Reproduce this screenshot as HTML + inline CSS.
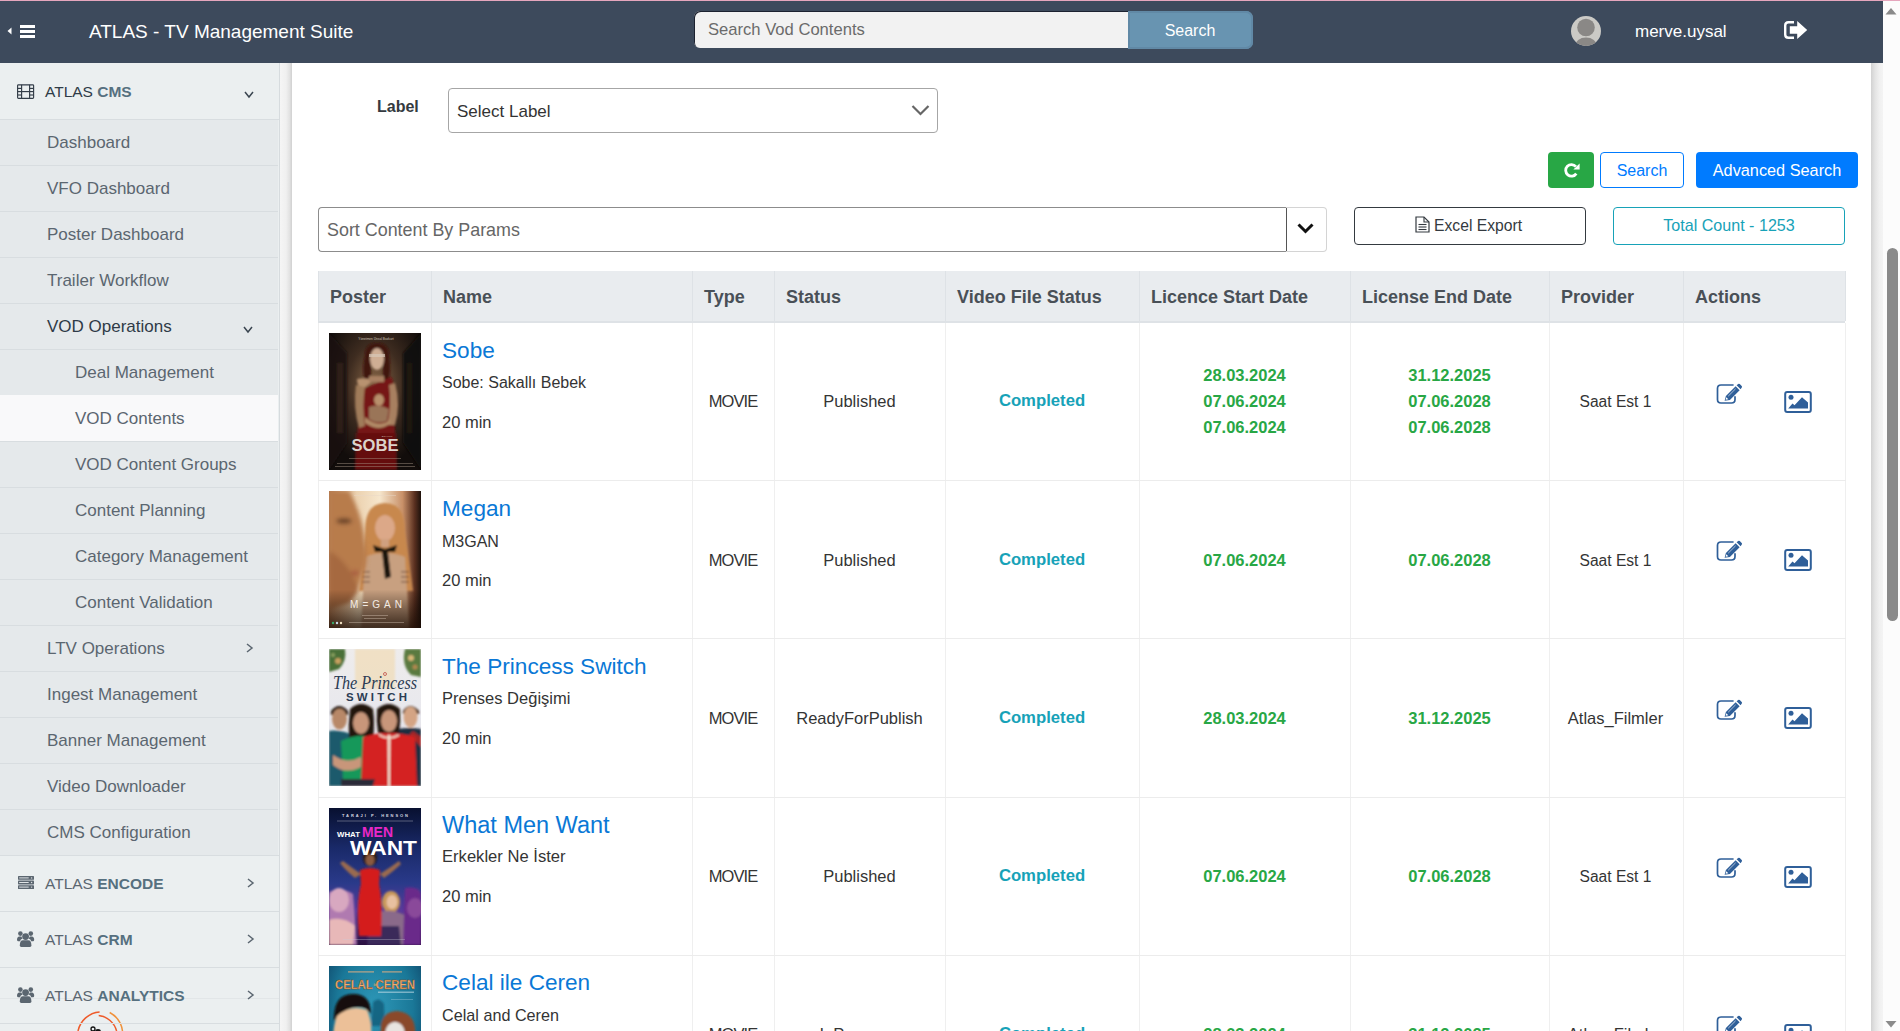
<!DOCTYPE html>
<html><head><meta charset="utf-8"><title>ATLAS - TV Management Suite</title>
<style>
html,body{margin:0;padding:0;width:1900px;height:1031px;overflow:hidden;background:#fff}
body{position:relative;font-family:'Liberation Sans', sans-serif}
.t{position:absolute;white-space:nowrap;font-family:'Liberation Sans', sans-serif}
.r{position:absolute;display:block}
b{font-weight:700}
</style></head><body>
<div class="r" style="left:0px;top:0px;width:1900px;height:1031px;background:#fff"></div>
<div class="r" style="left:0px;top:63px;width:279px;height:968px;background:#ebeff0"></div>
<div class="r" style="left:279px;top:63px;width:1px;height:968px;background:#d6dbde"></div>
<div class="r" style="left:280px;top:63px;width:12px;height:968px;background:linear-gradient(to right,#f5f5f5 0%,#f0f0f0 50%,#e2e2e2 80%,#d0d0d0 100%)"></div>
<div class="r" style="left:0px;top:119px;width:279px;height:1px;background:#d8dde0"></div>
<div class="r" style="left:0px;top:120px;width:278px;height:735px;background:#e5e9eb"></div>
<div class="r" style="left:0px;top:165px;width:278px;height:1px;background:#d8dde0"></div>
<div class="t" style="top:134px;font-size:17px;line-height:17px;color:#5b6670;left:47px;">Dashboard</div>
<div class="r" style="left:0px;top:211px;width:278px;height:1px;background:#d8dde0"></div>
<div class="t" style="top:180px;font-size:17px;line-height:17px;color:#5b6670;left:47px;">VFO Dashboard</div>
<div class="r" style="left:0px;top:257px;width:278px;height:1px;background:#d8dde0"></div>
<div class="t" style="top:226px;font-size:17px;line-height:17px;color:#5b6670;left:47px;">Poster Dashboard</div>
<div class="r" style="left:0px;top:303px;width:278px;height:1px;background:#d8dde0"></div>
<div class="t" style="top:272px;font-size:17px;line-height:17px;color:#5b6670;left:47px;">Trailer Workflow</div>
<div class="r" style="left:0px;top:349px;width:278px;height:1px;background:#d8dde0"></div>
<div class="t" style="top:318px;font-size:17px;line-height:17px;color:#2f3b47;left:47px;">VOD Operations</div>
<div class="r" style="left:0px;top:395px;width:278px;height:1px;background:#d8dde0"></div>
<div class="t" style="top:364px;font-size:17px;line-height:17px;color:#5b6670;left:75px;">Deal Management</div>
<div class="r" style="left:0px;top:395px;width:278px;height:46px;background:#f9f9fa"></div>
<div class="r" style="left:0px;top:441px;width:278px;height:1px;background:#d8dde0"></div>
<div class="t" style="top:410px;font-size:17px;line-height:17px;color:#5b6670;left:75px;">VOD Contents</div>
<div class="r" style="left:0px;top:487px;width:278px;height:1px;background:#d8dde0"></div>
<div class="t" style="top:456px;font-size:17px;line-height:17px;color:#5b6670;left:75px;">VOD Content Groups</div>
<div class="r" style="left:0px;top:533px;width:278px;height:1px;background:#d8dde0"></div>
<div class="t" style="top:502px;font-size:17px;line-height:17px;color:#5b6670;left:75px;">Content Planning</div>
<div class="r" style="left:0px;top:579px;width:278px;height:1px;background:#d8dde0"></div>
<div class="t" style="top:548px;font-size:17px;line-height:17px;color:#5b6670;left:75px;">Category Management</div>
<div class="r" style="left:0px;top:625px;width:278px;height:1px;background:#d8dde0"></div>
<div class="t" style="top:594px;font-size:17px;line-height:17px;color:#5b6670;left:75px;">Content Validation</div>
<div class="r" style="left:0px;top:671px;width:278px;height:1px;background:#d8dde0"></div>
<div class="t" style="top:640px;font-size:17px;line-height:17px;color:#5b6670;left:47px;">LTV Operations</div>
<div class="r" style="left:0px;top:717px;width:278px;height:1px;background:#d8dde0"></div>
<div class="t" style="top:686px;font-size:17px;line-height:17px;color:#5b6670;left:47px;">Ingest Management</div>
<div class="r" style="left:0px;top:763px;width:278px;height:1px;background:#d8dde0"></div>
<div class="t" style="top:732px;font-size:17px;line-height:17px;color:#5b6670;left:47px;">Banner Management</div>
<div class="r" style="left:0px;top:809px;width:278px;height:1px;background:#d8dde0"></div>
<div class="t" style="top:778px;font-size:17px;line-height:17px;color:#5b6670;left:47px;">Video Downloader</div>
<div class="r" style="left:0px;top:855px;width:278px;height:1px;background:#d8dde0"></div>
<div class="t" style="top:824px;font-size:17px;line-height:17px;color:#5b6670;left:47px;">CMS Configuration</div>
<svg class="r" style="left:243px;top:90px" width="12" height="9" viewBox="0 0 12 9"><polyline points="2,2 6.0,7 10,2" fill="none" stroke="#3a4550" stroke-width="1.5"/></svg>
<svg class="r" style="left:242px;top:325px" width="12" height="9" viewBox="0 0 12 9"><polyline points="2,2 6.0,7 10,2" fill="none" stroke="#3a4550" stroke-width="1.5"/></svg>
<svg class="r" style="left:245px;top:642px" width="9" height="12" viewBox="0 0 9 12"><polyline points="2,2 7,6.0 2,10" fill="none" stroke="#5b6670" stroke-width="1.5"/></svg>
<svg class="r" style="left:16px;top:83px" width="19" height="17" viewBox="0 0 19 17"><g fill="none" stroke="#333d48" stroke-width="1.15"><rect x="1.6" y="1.8" width="16" height="13.6" rx="0.8"/><line x1="5.6" y1="1.8" x2="5.6" y2="15.4"/><line x1="13.6" y1="1.8" x2="13.6" y2="15.4"/><line x1="1.6" y1="8.6" x2="17.6" y2="8.6"/><line x1="1.6" y1="5.4" x2="5.6" y2="5.4"/><line x1="1.6" y1="12" x2="5.6" y2="12"/><line x1="13.6" y1="5.4" x2="17.6" y2="5.4"/><line x1="13.6" y1="12" x2="17.6" y2="12"/></g></svg>
<div class="t" style="left:45px;top:84px;font-size:15.5px;line-height:15.5px;color:#2f3b47">ATLAS <b style="color:#56707f">CMS</b></div>
<div class="r" style="left:0px;top:855px;width:279px;height:1px;background:#d8dde0"></div>
<div class="r" style="left:0px;top:998px;width:279px;height:1px;background:#e2e6e8"></div>
<div class="r" style="left:0px;top:911px;width:279px;height:1px;background:#d8dde0"></div>
<div class="t" style="left:45px;top:876px;font-size:15.5px;line-height:15.5px;color:#5b6670">ATLAS <b style="color:#56707f">ENCODE</b></div>
<svg class="r" style="left:246px;top:877px" width="9" height="12" viewBox="0 0 9 12"><polyline points="2,2 7,6.0 2,10" fill="none" stroke="#5b6670" stroke-width="1.5"/></svg>
<div class="r" style="left:0px;top:967px;width:279px;height:1px;background:#d8dde0"></div>
<div class="t" style="left:45px;top:932px;font-size:15.5px;line-height:15.5px;color:#5b6670">ATLAS <b style="color:#56707f">CRM</b></div>
<svg class="r" style="left:246px;top:933px" width="9" height="12" viewBox="0 0 9 12"><polyline points="2,2 7,6.0 2,10" fill="none" stroke="#5b6670" stroke-width="1.5"/></svg>
<div class="r" style="left:0px;top:1023px;width:279px;height:1px;background:#d8dde0"></div>
<div class="t" style="left:45px;top:988px;font-size:15.5px;line-height:15.5px;color:#5b6670">ATLAS <b style="color:#56707f">ANALYTICS</b></div>
<svg class="r" style="left:246px;top:989px" width="9" height="12" viewBox="0 0 9 12"><polyline points="2,2 7,6.0 2,10" fill="none" stroke="#5b6670" stroke-width="1.5"/></svg>
<svg class="r" style="left:18px;top:876px" width="16" height="13" viewBox="0 0 16 13"><g fill="#5b6670"><rect x="0" y="0" width="16" height="3.8" rx="0.6"/><rect x="0" y="4.6" width="16" height="3.8" rx="0.6"/><rect x="0" y="9.2" width="16" height="3.8" rx="0.6"/></g><g fill="#dfe3e6"><rect x="1.2" y="1.4" width="9.5" height="1"/><rect x="1.2" y="6" width="9.5" height="1"/><rect x="1.2" y="10.6" width="9.5" height="1"/><circle cx="13.6" cy="1.9" r="0.7"/><circle cx="13.6" cy="6.5" r="0.7"/><circle cx="13.6" cy="11.1" r="0.7"/></g></svg>
<svg class="r" style="left:17px;top:931px" width="18" height="16" viewBox="0 0 18 16"><g fill="#5b6670"><circle cx="8.6" cy="5.6" r="3.4"/><circle cx="3.4" cy="2.6" r="2.3"/><circle cx="13.8" cy="2.6" r="2.3"/><path d="M2.8,14.6 Q2.8,9.2 6,9.2 H11.2 Q14.4,9.2 14.4,14.6 Q14.4,16 13,16 H4.2 Q2.8,16 2.8,14.6 Z"/><path d="M0,8.8 Q0,5.6 2.4,5.4 H4.4 Q5,6.6 5.6,7.6 Q3.4,8.4 3,10.2 H1 Q0,10.2 0,8.8 Z"/><path d="M17.2,8.8 Q17.2,5.6 14.8,5.4 H12.8 Q12.2,6.6 11.6,7.6 Q13.8,8.4 14.2,10.2 H16.2 Q17.2,10.2 17.2,8.8 Z"/></g></svg>
<svg class="r" style="left:17px;top:987px" width="18" height="16" viewBox="0 0 18 16"><g fill="#5b6670"><circle cx="8.6" cy="5.6" r="3.4"/><circle cx="3.4" cy="2.6" r="2.3"/><circle cx="13.8" cy="2.6" r="2.3"/><path d="M2.8,14.6 Q2.8,9.2 6,9.2 H11.2 Q14.4,9.2 14.4,14.6 Q14.4,16 13,16 H4.2 Q2.8,16 2.8,14.6 Z"/><path d="M0,8.8 Q0,5.6 2.4,5.4 H4.4 Q5,6.6 5.6,7.6 Q3.4,8.4 3,10.2 H1 Q0,10.2 0,8.8 Z"/><path d="M17.2,8.8 Q17.2,5.6 14.8,5.4 H12.8 Q12.2,6.6 11.6,7.6 Q13.8,8.4 14.2,10.2 H16.2 Q17.2,10.2 17.2,8.8 Z"/></g></svg>
<svg class="r" style="left:70px;top:1005px" width="60" height="26" viewBox="0 0 60 26"><g fill="none" stroke-width="1.5"><path d="M 8,26 A 24,24 0 0 1 29.6,7" stroke="#ee5a2a"/><path d="M 28.7,10.5 A 21,21 0 0 1 46.6,26" stroke="#ee5a2a"/><path d="M 39.7,7.5 A 25,25 0 0 1 52.5,26" stroke="#f0913a"/></g><circle cx="23" cy="24" r="2" fill="none" stroke="#111" stroke-width="1.3"/><ellipse cx="28" cy="26.5" rx="3" ry="2.5" fill="#111"/></svg>
<div class="r" style="left:0px;top:1023px;width:279px;height:1px;background:#d8dde0"></div>
<div class="r" style="left:0px;top:0px;width:1900px;height:1px;background:#e6a6bd"></div>
<div class="r" style="left:0px;top:1px;width:1883px;height:62px;background:#3d4a5c"></div>
<div class="r" style="left:20px;top:25px;width:15px;height:3px;background:#fff"></div>
<div class="r" style="left:20px;top:30px;width:15px;height:3px;background:#fff"></div>
<div class="r" style="left:20px;top:35px;width:15px;height:3px;background:#fff"></div>
<svg class="r" style="left:7px;top:27px" width="5" height="8" viewBox="0 0 5 8"><polygon points="4.5,0.5 4.5,7.5 0.5,4" fill="#fff"/></svg>
<div class="t" style="top:22px;font-size:19px;line-height:19px;color:#fff;left:89px;">ATLAS - TV Management Suite</div>
<div class="r" style="left:694px;top:11px;width:434px;height:37px;background:#f2f2f2;border-radius:6px 0 0 6px;box-shadow:inset 1px 1px 0 #1c2230"></div>
<div class="t" style="top:22px;font-size:16.6px;line-height:16.6px;color:#6b6b6b;left:708px;">Search Vod Contents</div>
<div class="r" style="left:1128px;top:11px;width:125px;height:38px;background:#6894b1;border-radius:0 7px 7px 0;box-shadow:inset 0 0 0 2px #6189a6"></div>
<div class="t" style="top:23px;font-size:16px;line-height:16px;color:#fff;left:890px;width:600px;text-align:center;">Search</div>
<svg class="r" style="left:1571px;top:16px" width="30" height="30" viewBox="0 0 30 30"><defs><clipPath id="av"><circle cx="15" cy="15" r="15"/></clipPath></defs><circle cx="15" cy="15" r="15" fill="#cbcac6"/><g clip-path="url(#av)" fill="#8a8886"><circle cx="15" cy="11.5" r="8.8"/><ellipse cx="15" cy="30" rx="11" ry="8.5"/></g></svg>
<div class="t" style="top:23px;font-size:17px;line-height:17px;color:#fff;left:1635px;">merve.uysal</div>
<svg class="r" style="left:1784px;top:21px" width="24" height="18" viewBox="0 0 24 18"><path d="M10,1.2 H4.5 Q1.2,1.2 1.2,4.5 V13.5 Q1.2,16.8 4.5,16.8 H10" fill="none" stroke="#fff" stroke-width="2.4"/><path d="M5.8,5.2 H13.2 V0 L23.2,9 L13.2,18 V12.8 H5.8 Z" fill="#fff"/></svg>
<div class="r" style="left:1871px;top:63px;width:12px;height:968px;background:linear-gradient(to right,#d2d2d2 0%,#e4e4e4 35%,#f0f0f0 70%,#f4f4f4 100%)"></div>
<div class="r" style="left:1883px;top:1px;width:17px;height:1030px;background:#fcfcfc"></div>
<svg class="r" style="left:1884px;top:7px" width="14" height="9" viewBox="0 0 14 9"><polygon points="7,1 12.5,7.5 1.5,7.5" fill="#8a8a8a"/></svg>
<svg class="r" style="left:1884px;top:1020px" width="14" height="9" viewBox="0 0 14 9"><polygon points="1.5,1 12.5,1 7,7.5" fill="#8a8a8a"/></svg>
<div class="r" style="left:1887px;top:248px;width:11px;height:373px;background:#8a8a8a;border-radius:6px"></div>
<div class="t" style="top:99px;font-size:16px;line-height:16px;color:#343a40;font-weight:700;left:377px;">Label</div>
<div class="r" style="left:448px;top:88px;width:490px;height:45px;border:1px solid #a6a6a6;border-radius:4px;box-sizing:border-box;background:#fff"></div>
<div class="t" style="top:103px;font-size:17px;line-height:17px;color:#333;left:457px;">Select Label</div>
<svg class="r" style="left:910px;top:104px" width="21" height="13" viewBox="0 0 21 13"><polyline points="2.5,2 10.5,10 18.5,2" fill="none" stroke="#666" stroke-width="2.2"/></svg>
<div class="r" style="left:1548px;top:152px;width:46px;height:36px;background:#28a745;border-radius:4px"></div>
<svg class="r" style="left:1564px;top:162px" width="17" height="17" viewBox="0 0 17 17"><path d="M11.9,4.6 A5.8,5.8 0 1 0 12.3,11.6" fill="none" stroke="#fff" stroke-width="2.8"/><polygon points="15.6,1.4 15.6,7.6 9.4,7.6" fill="#fff"/></svg>
<div class="r" style="left:1600px;top:152px;width:84px;height:36px;border:1px solid #007bff;border-radius:4px;box-sizing:border-box"></div>
<div class="t" style="top:163px;font-size:16px;line-height:16px;color:#007bff;left:1342px;width:600px;text-align:center;">Search</div>
<div class="r" style="left:1696px;top:152px;width:162px;height:36px;background:#007bff;border-radius:4px"></div>
<div class="t" style="top:162px;font-size:16.3px;line-height:16.3px;color:#fff;left:1477px;width:600px;text-align:center;">Advanced Search</div>
<div class="r" style="left:318px;top:207px;width:969px;height:45px;border:1px solid #8c8c8c;border-right:1px solid #555;border-radius:4px 0 0 4px;box-sizing:border-box"></div>
<div class="t" style="top:222px;font-size:17.9px;line-height:17.9px;color:#666;left:327px;">Sort Content By Params</div>
<div class="r" style="left:1286px;top:207px;width:41px;height:45px;border:1px solid #d4d4d4;border-left:none;border-radius:0 4px 4px 0;box-sizing:border-box"></div>
<svg class="r" style="left:1296px;top:222px" width="21" height="14" viewBox="0 0 21 14"><polyline points="2.5,2.5 9.5,9.5 16.5,2.5" fill="none" stroke="#111" stroke-width="3"/></svg>
<div class="r" style="left:1354px;top:207px;width:232px;height:38px;border:1px solid #343a40;border-radius:4px;box-sizing:border-box"></div>
<svg class="r" style="left:1415px;top:216px" width="15" height="17" viewBox="0 0 15 17"><path d="M1,1 H9 L14,6 V16 H1 Z" fill="none" stroke="#343a40" stroke-width="1.2"/><path d="M9,1 V6 H14" fill="none" stroke="#343a40" stroke-width="1.1"/><g stroke="#343a40" stroke-width="1.1"><line x1="3.5" y1="8.5" x2="11.5" y2="8.5"/><line x1="3.5" y1="11" x2="11.5" y2="11"/><line x1="3.5" y1="13.5" x2="11.5" y2="13.5"/></g></svg>
<div class="t" style="top:218px;font-size:15.7px;line-height:15.7px;color:#343a40;left:1434px;">Excel Export</div>
<div class="r" style="left:1613px;top:207px;width:232px;height:38px;border:1px solid #17a2b8;border-radius:4px;box-sizing:border-box"></div>
<div class="t" style="top:217px;font-size:16.1px;line-height:16.1px;color:#17a2b8;left:1429px;width:600px;text-align:center;">Total Count - 1253</div>
<div class="r" style="left:318px;top:271px;width:1527px;height:50px;background:#e9ecef"></div>
<div class="r" style="left:318px;top:321px;width:1527px;height:2px;background:#dee2e6"></div>
<div class="t" style="top:288px;font-size:18px;line-height:18px;color:#495057;font-weight:700;left:330px;">Poster</div>
<div class="t" style="top:288px;font-size:18px;line-height:18px;color:#495057;font-weight:700;left:443px;">Name</div>
<div class="t" style="top:288px;font-size:18px;line-height:18px;color:#495057;font-weight:700;left:704px;">Type</div>
<div class="t" style="top:288px;font-size:18px;line-height:18px;color:#495057;font-weight:700;left:786px;">Status</div>
<div class="t" style="top:288px;font-size:18px;line-height:18px;color:#495057;font-weight:700;left:957px;">Video File Status</div>
<div class="t" style="top:288px;font-size:18px;line-height:18px;color:#495057;font-weight:700;left:1151px;">Licence Start Date</div>
<div class="t" style="top:288px;font-size:18px;line-height:18px;color:#495057;font-weight:700;left:1362px;">License End Date</div>
<div class="t" style="top:288px;font-size:18px;line-height:18px;color:#495057;font-weight:700;left:1561px;">Provider</div>
<div class="t" style="top:288px;font-size:18px;line-height:18px;color:#495057;font-weight:700;left:1695px;">Actions</div>
<div class="r" style="left:318px;top:271px;width:1px;height:50px;background:#dee2e6"></div>
<div class="r" style="left:318px;top:323px;width:1px;height:708px;background:#efefef"></div>
<div class="r" style="left:431px;top:271px;width:1px;height:50px;background:#dee2e6"></div>
<div class="r" style="left:431px;top:323px;width:1px;height:708px;background:#efefef"></div>
<div class="r" style="left:692px;top:271px;width:1px;height:50px;background:#dee2e6"></div>
<div class="r" style="left:692px;top:323px;width:1px;height:708px;background:#efefef"></div>
<div class="r" style="left:774px;top:271px;width:1px;height:50px;background:#dee2e6"></div>
<div class="r" style="left:774px;top:323px;width:1px;height:708px;background:#efefef"></div>
<div class="r" style="left:945px;top:271px;width:1px;height:50px;background:#dee2e6"></div>
<div class="r" style="left:945px;top:323px;width:1px;height:708px;background:#efefef"></div>
<div class="r" style="left:1139px;top:271px;width:1px;height:50px;background:#dee2e6"></div>
<div class="r" style="left:1139px;top:323px;width:1px;height:708px;background:#efefef"></div>
<div class="r" style="left:1350px;top:271px;width:1px;height:50px;background:#dee2e6"></div>
<div class="r" style="left:1350px;top:323px;width:1px;height:708px;background:#efefef"></div>
<div class="r" style="left:1549px;top:271px;width:1px;height:50px;background:#dee2e6"></div>
<div class="r" style="left:1549px;top:323px;width:1px;height:708px;background:#efefef"></div>
<div class="r" style="left:1683px;top:271px;width:1px;height:50px;background:#dee2e6"></div>
<div class="r" style="left:1683px;top:323px;width:1px;height:708px;background:#efefef"></div>
<div class="r" style="left:1845px;top:271px;width:1px;height:50px;background:#dee2e6"></div>
<div class="r" style="left:1845px;top:323px;width:1px;height:708px;background:#efefef"></div>
<div class="r" style="left:318px;top:480px;width:1528px;height:1px;background:#ececec"></div>
<div class="r" style="left:318px;top:638px;width:1528px;height:1px;background:#ececec"></div>
<div class="r" style="left:318px;top:797px;width:1528px;height:1px;background:#ececec"></div>
<div class="r" style="left:318px;top:955px;width:1528px;height:1px;background:#ececec"></div>
<div class="t" style="top:340px;font-size:22.6px;line-height:22.6px;color:#0a78d6;left:442px;">Sobe</div>
<div class="t" style="top:375px;font-size:16px;line-height:16px;color:#343434;left:442px;">Sobe: Sakallı Bebek</div>
<div class="t" style="top:414px;font-size:16.5px;line-height:16.5px;color:#343434;left:442px;">20 min</div>
<div class="t" style="top:393px;font-size:16.5px;line-height:16.5px;color:#343434;letter-spacing:-0.9px;left:433px;width:600px;text-align:center;">MOVIE</div>
<div class="t" style="top:393px;font-size:16.5px;line-height:16.5px;color:#343434;left:559.5px;width:600px;text-align:center;">Published</div>
<div class="t" style="top:393px;font-size:16.7px;line-height:16.7px;color:#17a2b8;font-weight:700;left:742px;width:600px;text-align:center;">Completed</div>
<div class="t" style="top:367px;font-size:16.5px;line-height:16.5px;color:#28a745;font-weight:700;left:944.5px;width:600px;text-align:center;">28.03.2024</div>
<div class="t" style="top:367px;font-size:16.5px;line-height:16.5px;color:#28a745;font-weight:700;left:1149.5px;width:600px;text-align:center;">31.12.2025</div>
<div class="t" style="top:393px;font-size:16.5px;line-height:16.5px;color:#28a745;font-weight:700;left:944.5px;width:600px;text-align:center;">07.06.2024</div>
<div class="t" style="top:393px;font-size:16.5px;line-height:16.5px;color:#28a745;font-weight:700;left:1149.5px;width:600px;text-align:center;">07.06.2028</div>
<div class="t" style="top:419px;font-size:16.5px;line-height:16.5px;color:#28a745;font-weight:700;left:944.5px;width:600px;text-align:center;">07.06.2024</div>
<div class="t" style="top:419px;font-size:16.5px;line-height:16.5px;color:#28a745;font-weight:700;left:1149.5px;width:600px;text-align:center;">07.06.2028</div>
<div class="t" style="top:394px;font-size:15.6px;line-height:15.6px;color:#343434;left:1315.5px;width:600px;text-align:center;">Saat Est 1</div>
<svg class="r" style="left:1716px;top:383px" width="27" height="22" viewBox="0 0 27 22"><path d="M17.6,2 H5 Q1.5,2 1.5,5.5 V16.5 Q1.5,20 5,20 H15.5 Q19,20 19,16.5 V13.2" fill="none" stroke="#2f5f99" stroke-width="1.7"/><path d="M8.6,17.8 L9.9,12.9 L19.6,3.2 L23.6,7.2 L13.9,16.9 Z" fill="#2f5f99"/><path d="M9.6,16.8 L10.3,14.2 L12.3,16.2 Z" fill="#fff"/><line x1="12.2" y1="13.2" x2="19.6" y2="5.8" stroke="#fff" stroke-width="0.6"/><path d="M20.6,2.2 L22.2,0.9 Q23,0.3 23.8,1.1 L25.7,3 Q26.4,3.8 25.8,4.6 L24.6,6.2 Z" fill="#2f5f99"/></svg>
<svg class="r" style="left:1784px;top:391px" width="28" height="22" viewBox="0 0 28 22"><rect x="1.2" y="1" width="25.6" height="20" rx="2" fill="none" stroke="#2f5f99" stroke-width="2"/><circle cx="7" cy="6.3" r="2.5" fill="#2f5f99"/><path d="M4.2,17.6 L8.5,12.6 L10.5,14.3 L18,6.2 L24,11.6 V17.6 Z" fill="#2f5f99"/></svg>
<div class="t" style="top:498px;font-size:22.6px;line-height:22.6px;color:#0a78d6;left:442px;">Megan</div>
<div class="t" style="top:534px;font-size:16px;line-height:16px;color:#343434;left:442px;">M3GAN</div>
<div class="t" style="top:572px;font-size:16.5px;line-height:16.5px;color:#343434;left:442px;">20 min</div>
<div class="t" style="top:552px;font-size:16.5px;line-height:16.5px;color:#343434;letter-spacing:-0.9px;left:433px;width:600px;text-align:center;">MOVIE</div>
<div class="t" style="top:552px;font-size:16.5px;line-height:16.5px;color:#343434;left:559.5px;width:600px;text-align:center;">Published</div>
<div class="t" style="top:552px;font-size:16.7px;line-height:16.7px;color:#17a2b8;font-weight:700;left:742px;width:600px;text-align:center;">Completed</div>
<div class="t" style="top:552px;font-size:16.5px;line-height:16.5px;color:#28a745;font-weight:700;left:944.5px;width:600px;text-align:center;">07.06.2024</div>
<div class="t" style="top:552px;font-size:16.5px;line-height:16.5px;color:#28a745;font-weight:700;left:1149.5px;width:600px;text-align:center;">07.06.2028</div>
<div class="t" style="top:553px;font-size:15.6px;line-height:15.6px;color:#343434;left:1315.5px;width:600px;text-align:center;">Saat Est 1</div>
<svg class="r" style="left:1716px;top:540px" width="27" height="22" viewBox="0 0 27 22"><path d="M17.6,2 H5 Q1.5,2 1.5,5.5 V16.5 Q1.5,20 5,20 H15.5 Q19,20 19,16.5 V13.2" fill="none" stroke="#2f5f99" stroke-width="1.7"/><path d="M8.6,17.8 L9.9,12.9 L19.6,3.2 L23.6,7.2 L13.9,16.9 Z" fill="#2f5f99"/><path d="M9.6,16.8 L10.3,14.2 L12.3,16.2 Z" fill="#fff"/><line x1="12.2" y1="13.2" x2="19.6" y2="5.8" stroke="#fff" stroke-width="0.6"/><path d="M20.6,2.2 L22.2,0.9 Q23,0.3 23.8,1.1 L25.7,3 Q26.4,3.8 25.8,4.6 L24.6,6.2 Z" fill="#2f5f99"/></svg>
<svg class="r" style="left:1784px;top:549px" width="28" height="22" viewBox="0 0 28 22"><rect x="1.2" y="1" width="25.6" height="20" rx="2" fill="none" stroke="#2f5f99" stroke-width="2"/><circle cx="7" cy="6.3" r="2.5" fill="#2f5f99"/><path d="M4.2,17.6 L8.5,12.6 L10.5,14.3 L18,6.2 L24,11.6 V17.6 Z" fill="#2f5f99"/></svg>
<div class="t" style="top:656px;font-size:22.6px;line-height:22.6px;color:#0a78d6;left:442px;">The Princess Switch</div>
<div class="t" style="top:690px;font-size:16.5px;line-height:16.5px;color:#343434;left:442px;">Prenses Değişimi</div>
<div class="t" style="top:730px;font-size:16.5px;line-height:16.5px;color:#343434;left:442px;">20 min</div>
<div class="t" style="top:710px;font-size:16.5px;line-height:16.5px;color:#343434;letter-spacing:-0.9px;left:433px;width:600px;text-align:center;">MOVIE</div>
<div class="t" style="top:710px;font-size:16.5px;line-height:16.5px;color:#343434;left:559.5px;width:600px;text-align:center;">ReadyForPublish</div>
<div class="t" style="top:710px;font-size:16.7px;line-height:16.7px;color:#17a2b8;font-weight:700;left:742px;width:600px;text-align:center;">Completed</div>
<div class="t" style="top:710px;font-size:16.5px;line-height:16.5px;color:#28a745;font-weight:700;left:944.5px;width:600px;text-align:center;">28.03.2024</div>
<div class="t" style="top:710px;font-size:16.5px;line-height:16.5px;color:#28a745;font-weight:700;left:1149.5px;width:600px;text-align:center;">31.12.2025</div>
<div class="t" style="top:710px;font-size:16.5px;line-height:16.5px;color:#343434;left:1315.5px;width:600px;text-align:center;">Atlas_Filmler</div>
<svg class="r" style="left:1716px;top:699px" width="27" height="22" viewBox="0 0 27 22"><path d="M17.6,2 H5 Q1.5,2 1.5,5.5 V16.5 Q1.5,20 5,20 H15.5 Q19,20 19,16.5 V13.2" fill="none" stroke="#2f5f99" stroke-width="1.7"/><path d="M8.6,17.8 L9.9,12.9 L19.6,3.2 L23.6,7.2 L13.9,16.9 Z" fill="#2f5f99"/><path d="M9.6,16.8 L10.3,14.2 L12.3,16.2 Z" fill="#fff"/><line x1="12.2" y1="13.2" x2="19.6" y2="5.8" stroke="#fff" stroke-width="0.6"/><path d="M20.6,2.2 L22.2,0.9 Q23,0.3 23.8,1.1 L25.7,3 Q26.4,3.8 25.8,4.6 L24.6,6.2 Z" fill="#2f5f99"/></svg>
<svg class="r" style="left:1784px;top:707px" width="28" height="22" viewBox="0 0 28 22"><rect x="1.2" y="1" width="25.6" height="20" rx="2" fill="none" stroke="#2f5f99" stroke-width="2"/><circle cx="7" cy="6.3" r="2.5" fill="#2f5f99"/><path d="M4.2,17.6 L8.5,12.6 L10.5,14.3 L18,6.2 L24,11.6 V17.6 Z" fill="#2f5f99"/></svg>
<div class="t" style="top:814px;font-size:23.5px;line-height:23.5px;color:#0a78d6;left:442px;">What Men Want</div>
<div class="t" style="top:849px;font-size:16.6px;line-height:16.6px;color:#343434;left:442px;">Erkekler Ne İster</div>
<div class="t" style="top:888px;font-size:16.5px;line-height:16.5px;color:#343434;left:442px;">20 min</div>
<div class="t" style="top:868px;font-size:16.5px;line-height:16.5px;color:#343434;letter-spacing:-0.9px;left:433px;width:600px;text-align:center;">MOVIE</div>
<div class="t" style="top:868px;font-size:16.5px;line-height:16.5px;color:#343434;left:559.5px;width:600px;text-align:center;">Published</div>
<div class="t" style="top:868px;font-size:16.7px;line-height:16.7px;color:#17a2b8;font-weight:700;left:742px;width:600px;text-align:center;">Completed</div>
<div class="t" style="top:868px;font-size:16.5px;line-height:16.5px;color:#28a745;font-weight:700;left:944.5px;width:600px;text-align:center;">07.06.2024</div>
<div class="t" style="top:868px;font-size:16.5px;line-height:16.5px;color:#28a745;font-weight:700;left:1149.5px;width:600px;text-align:center;">07.06.2028</div>
<div class="t" style="top:869px;font-size:15.6px;line-height:15.6px;color:#343434;left:1315.5px;width:600px;text-align:center;">Saat Est 1</div>
<svg class="r" style="left:1716px;top:857px" width="27" height="22" viewBox="0 0 27 22"><path d="M17.6,2 H5 Q1.5,2 1.5,5.5 V16.5 Q1.5,20 5,20 H15.5 Q19,20 19,16.5 V13.2" fill="none" stroke="#2f5f99" stroke-width="1.7"/><path d="M8.6,17.8 L9.9,12.9 L19.6,3.2 L23.6,7.2 L13.9,16.9 Z" fill="#2f5f99"/><path d="M9.6,16.8 L10.3,14.2 L12.3,16.2 Z" fill="#fff"/><line x1="12.2" y1="13.2" x2="19.6" y2="5.8" stroke="#fff" stroke-width="0.6"/><path d="M20.6,2.2 L22.2,0.9 Q23,0.3 23.8,1.1 L25.7,3 Q26.4,3.8 25.8,4.6 L24.6,6.2 Z" fill="#2f5f99"/></svg>
<svg class="r" style="left:1784px;top:866px" width="28" height="22" viewBox="0 0 28 22"><rect x="1.2" y="1" width="25.6" height="20" rx="2" fill="none" stroke="#2f5f99" stroke-width="2"/><circle cx="7" cy="6.3" r="2.5" fill="#2f5f99"/><path d="M4.2,17.6 L8.5,12.6 L10.5,14.3 L18,6.2 L24,11.6 V17.6 Z" fill="#2f5f99"/></svg>
<div class="t" style="top:972px;font-size:22.6px;line-height:22.6px;color:#0a78d6;left:442px;">Celal ile Ceren</div>
<div class="t" style="top:1007px;font-size:16.2px;line-height:16.2px;color:#343434;left:442px;">Celal and Ceren</div>
<div class="t" style="top:1046px;font-size:16.5px;line-height:16.5px;color:#343434;left:442px;">20 min</div>
<div class="t" style="top:1026px;font-size:16.5px;line-height:16.5px;color:#343434;letter-spacing:-0.9px;left:433px;width:600px;text-align:center;">MOVIE</div>
<div class="t" style="top:1026px;font-size:16.5px;line-height:16.5px;color:#343434;left:559.5px;width:600px;text-align:center;">InProgress</div>
<div class="t" style="top:1026px;font-size:16.7px;line-height:16.7px;color:#17a2b8;font-weight:700;left:742px;width:600px;text-align:center;">Completed</div>
<div class="t" style="top:1026px;font-size:16.5px;line-height:16.5px;color:#28a745;font-weight:700;left:944.5px;width:600px;text-align:center;">28.03.2024</div>
<div class="t" style="top:1026px;font-size:16.5px;line-height:16.5px;color:#28a745;font-weight:700;left:1149.5px;width:600px;text-align:center;">31.12.2025</div>
<div class="t" style="top:1026px;font-size:16.5px;line-height:16.5px;color:#343434;left:1315.5px;width:600px;text-align:center;">Atlas_Filmler</div>
<svg class="r" style="left:1716px;top:1015px" width="27" height="22" viewBox="0 0 27 22"><path d="M17.6,2 H5 Q1.5,2 1.5,5.5 V16.5 Q1.5,20 5,20 H15.5 Q19,20 19,16.5 V13.2" fill="none" stroke="#2f5f99" stroke-width="1.7"/><path d="M8.6,17.8 L9.9,12.9 L19.6,3.2 L23.6,7.2 L13.9,16.9 Z" fill="#2f5f99"/><path d="M9.6,16.8 L10.3,14.2 L12.3,16.2 Z" fill="#fff"/><line x1="12.2" y1="13.2" x2="19.6" y2="5.8" stroke="#fff" stroke-width="0.6"/><path d="M20.6,2.2 L22.2,0.9 Q23,0.3 23.8,1.1 L25.7,3 Q26.4,3.8 25.8,4.6 L24.6,6.2 Z" fill="#2f5f99"/></svg>
<svg class="r" style="left:1784px;top:1024px" width="28" height="22" viewBox="0 0 28 22"><rect x="1.2" y="1" width="25.6" height="20" rx="2" fill="none" stroke="#2f5f99" stroke-width="2"/><circle cx="7" cy="6.3" r="2.5" fill="#2f5f99"/><path d="M4.2,17.6 L8.5,12.6 L10.5,14.3 L18,6.2 L24,11.6 V17.6 Z" fill="#2f5f99"/></svg>
<svg class="r" style="left:329px;top:333px" width="92" height="137" viewBox="0 0 92 137"><defs><radialGradient id="p1g" cx="0.5" cy="0.38" r="0.6"><stop offset="0" stop-color="#8a6848"/><stop offset="0.5" stop-color="#3e2c20"/><stop offset="1" stop-color="#120d0b"/></radialGradient>
<filter id="b1" x="-20%" y="-20%" width="140%" height="140%"><feGaussianBlur stdDeviation="1.2"/></filter><filter id="b1s"><feGaussianBlur stdDeviation="0.5"/></filter></defs>
<rect width="92" height="137" fill="url(#p1g)"/>
<g filter="url(#b1)">
<path d="M0,0 L18,20 L18,110 L0,137 Z" fill="#1a1310" opacity="0.8"/><path d="M92,0 L74,20 L74,110 L92,137 Z" fill="#0e0a08" opacity="0.9"/>
<rect x="8" y="30" width="6" height="70" fill="#4a3626" opacity="0.35"/><rect x="78" y="30" width="5" height="70" fill="#3a2a20" opacity="0.3"/>
<path d="M36,22 Q36,10 48,10 Q60,10 60,22 Q62,36 60,46 L54,46 L54,30 L42,30 L42,46 L35,46 Q33,34 36,22 Z" fill="#40140e"/>
<path d="M34,56 L62,44 Q66,50 64,60 L68,137 L26,137 Q28,90 34,56 Z" fill="#761414"/><path d="M28,46 Q38,44 44,48 L34,56 Q28,54 28,46 Z" fill="#b89270"/><path d="M26,100 L68,100 L68,137 L26,137 Z" fill="#5a0e0e" opacity="0.6"/>
<path d="M27,52 Q24,75 30,95 L36,93 Q33,72 36,54 Z" fill="#a07c5a"/>
<path d="M66,50 Q72,72 66,92 L58,92 Q63,72 60,52 Z" fill="#a88060"/>
<ellipse cx="48" cy="26" rx="7" ry="11" fill="#cfae94"/>
<rect x="40" y="43" width="15" height="6" fill="#a88062"/>
<ellipse cx="50" cy="67" rx="5" ry="6" fill="#b8906c"/>
<path d="M40,74 Q50,70 60,76 L58,88 Q48,92 40,86 Z" fill="#9a7458"/>
<path d="M36,84 Q50,96 62,86 L62,90 Q50,100 36,90 Z" fill="#b08a66"/>
</g>
<rect x="40" y="21" width="16" height="3" fill="#d8c8b8" opacity="0.7" filter="url(#b1s)"/>
<text x="47" y="7" font-family="Liberation Sans" font-size="3.2" fill="#cfc6bc" text-anchor="middle">Yönetmen Ünsal Bozkurt</text>
<text x="46" y="104" font-family="Liberation Sans" font-size="2.5" fill="#c8b8a8" text-anchor="middle" dx="12">BİR FİLM</text>
<text x="46" y="118" font-family="Liberation Sans" font-weight="700" font-size="16.5" fill="#dcd4cc" text-anchor="middle" textLength="47" lengthAdjust="spacingAndGlyphs">SOBE</text>
<g fill="#a89888" opacity="0.45"><rect x="20" y="125" width="52" height="1"/><rect x="8" y="130" width="76" height="1"/><rect x="6" y="133" width="80" height="1"/></g></svg>
<svg class="r" style="left:329px;top:491px" width="92" height="137" viewBox="0 0 92 137"><defs><linearGradient id="p2bg" x1="0" y1="0" x2="1" y2="0"><stop offset="0" stop-color="#b27a52"/><stop offset="0.3" stop-color="#ecd2b0"/><stop offset="0.55" stop-color="#f6e6cc"/><stop offset="0.8" stop-color="#c89068"/><stop offset="0.93" stop-color="#5a3020"/><stop offset="1" stop-color="#1e120c"/></linearGradient>
<filter id="b2" x="-30%" y="-30%" width="160%" height="160%"><feGaussianBlur stdDeviation="2.2"/></filter><filter id="b2s" x="-20%" y="-20%" width="140%" height="140%"><feGaussianBlur stdDeviation="0.9"/></filter>
<linearGradient id="p2v" x1="0" y1="0" x2="0" y2="1"><stop offset="0" stop-color="#000" stop-opacity="0"/><stop offset="0.72" stop-color="#000" stop-opacity="0"/><stop offset="1" stop-color="#1a0c04" stop-opacity="0.8"/></linearGradient></defs>
<rect width="92" height="137" fill="url(#p2bg)"/>
<g filter="url(#b2s)">
<path d="M36,40 Q36,12 56,12 Q76,12 76,40 Q80,70 84,100 L30,100 Q34,70 36,40 Z" fill="#c8884e"/>
<path d="M36,66 Q56,58 76,66 L80,137 L32,137 Z" fill="#c8a080"/>
<g fill="#6a4a3a" opacity="0.6"><rect x="33" y="80" width="8" height="1.6"/><rect x="33" y="85" width="8" height="1.6"/><rect x="33" y="90" width="8" height="1.6"/><rect x="72" y="80" width="8" height="1.6"/><rect x="72" y="85" width="8" height="1.6"/><rect x="72" y="90" width="8" height="1.6"/></g>
<ellipse cx="56" cy="37" rx="10" ry="13" fill="#dca888"/>
<rect x="52" y="48" width="8" height="8" fill="#d0a080"/>
<path d="M44,54 L56,58 L68,54 L66,61 L59,61 L62,86 L56,88 L53,61 L46,61 Z" fill="#1a1210"/>
</g>
<g filter="url(#b2)">
<path d="M0,0 L20,0 Q34,25 36,50 Q40,70 34,82 Q30,100 20,112 L0,118 Z" fill="#b87c4c"/>
<path d="M0,60 Q20,70 30,100 L20,112 L0,118 Z" fill="#9a5e38" opacity="0.6"/>
<ellipse cx="15" cy="30" rx="8" ry="3" fill="#6a4228"/>
<ellipse cx="26" cy="82" rx="4" ry="2.5" fill="#a85a40"/>
</g>
<rect width="92" height="137" fill="url(#p2v)"/>
<text x="47" y="117" font-family="Liberation Sans" font-size="10" fill="#f4ece4" text-anchor="middle" textLength="52" lengthAdjust="spacing">M=GAN</text>
<g fill="#e8d8c8" opacity="0.45"><rect x="25" y="4" width="42" height="1"/><rect x="33" y="124" width="26" height="0.8"/><rect x="35" y="127" width="22" height="0.8"/><rect x="20" y="131" width="55" height="0.8"/></g>
<g><circle cx="4" cy="132" r="1.2" fill="#3aa86a"/><circle cx="8" cy="132" r="1.2" fill="#c8d8e8"/><circle cx="12" cy="132" r="1.2" fill="#f0e0c0"/></g></svg>
<svg class="r" style="left:329px;top:649px" width="92" height="137" viewBox="0 0 92 137"><defs><filter id="b3" x="-20%" y="-20%" width="140%" height="140%"><feGaussianBlur stdDeviation="0.8"/></filter>
<linearGradient id="p3bg" x1="0" y1="0" x2="0" y2="1"><stop offset="0" stop-color="#eeecec"/><stop offset="0.5" stop-color="#e8e8ee"/><stop offset="1" stop-color="#d8d0d0"/></linearGradient></defs>
<rect width="92" height="137" fill="url(#p3bg)"/>
<g filter="url(#b3)">
<rect x="26" y="0" width="40" height="40" fill="#f0dcb8" opacity="0.75"/>
<path d="M0,0 L16,0 Q18,12 10,20 L0,23 Z" fill="#4a7038"/><circle cx="9" cy="12" r="3" fill="#c8a060"/><circle cx="4" cy="6" r="2" fill="#8aa060"/>
<path d="M92,0 L76,0 Q72,16 82,26 L92,28 Z" fill="#5a7a40"/><circle cx="82" cy="9" r="3" fill="#d8b878"/><circle cx="86" cy="18" r="2.5" fill="#b08850"/>
<path d="M2,62 Q10,52 19,62 L19,66 L2,66 Z" fill="#2a1c14"/>
<ellipse cx="10.5" cy="70" rx="7.5" ry="10.5" fill="#b88868"/>
<path d="M0,82 Q12,80 28,88 L28,137 L0,137 Z" fill="#1c5a6c"/>
<path d="M74,62 Q81,52 90,62 L90,65 L74,65 Z" fill="#3a2418"/>
<ellipse cx="81.5" cy="68" rx="7" ry="10.5" fill="#d4a484"/>
<path d="M68,80 Q82,78 92,80 L92,137 L70,137 Z" fill="#1e2e40"/><path d="M84,82 L92,88 L92,98 L80,86 Z" fill="#a82828"/>
<path d="M21,60 Q32,50 44,60 Q46,75 44,90 L20,90 Q19,75 21,60 Z" fill="#22140e"/>
<ellipse cx="32" cy="74" rx="8" ry="11" fill="#c8967a"/>
<path d="M12,92 Q28,84 44,88 L46,130 L14,130 Z" fill="#16985a"/>
<path d="M4,106 Q18,116 32,108 L32,118 Q16,126 4,116 Z" fill="#c8967a"/>
<path d="M48,60 Q60,50 71,60 Q72,72 70,84 L49,84 Q47,72 48,60 Z" fill="#22140e"/>
<ellipse cx="60" cy="72" rx="8" ry="11" fill="#c8967a"/>
<path d="M34,88 Q60,80 86,88 L88,137 L32,137 Z" fill="#d42020"/>
<path d="M58.5,86 L61.5,86 L61,137 L59,137 Z" fill="#f0e0d0"/><path d="M50,86 Q60,92 70,86" fill="none" stroke="#f0e0d0" stroke-width="1.5"/>
<path d="M12,130 L46,130 L44,137 L12,137 Z" fill="#2a2a38"/>
</g>
<text x="46" y="40" font-family="Liberation Serif" font-style="italic" font-size="19" fill="#2c3c54" text-anchor="middle" textLength="84" lengthAdjust="spacingAndGlyphs">The Princess</text>
<text x="47.5" y="51.5" font-family="Liberation Sans" font-weight="700" font-size="11" fill="#2c3c54" text-anchor="middle" textLength="61" lengthAdjust="spacingAndGlyphs">S W I T C H</text>
<circle cx="56" cy="25" r="1.5" fill="none" stroke="#b02020" stroke-width="0.6"/></svg>
<svg class="r" style="left:329px;top:808px" width="92" height="137" viewBox="0 0 92 137"><defs><linearGradient id="p4bg" x1="0" y1="0" x2="0" y2="1"><stop offset="0" stop-color="#081030"/><stop offset="0.3" stop-color="#1a2a6a"/><stop offset="0.55" stop-color="#2a3a8a"/><stop offset="0.75" stop-color="#5a3a9a"/><stop offset="1" stop-color="#2a1040"/></linearGradient>
<filter id="b4" x="-20%" y="-20%" width="140%" height="140%"><feGaussianBlur stdDeviation="0.9"/></filter></defs>
<rect width="92" height="137" fill="url(#p4bg)"/>
<g filter="url(#b4)">
<path d="M0,84 Q12,78 24,86 L28,137 L0,137 Z" fill="#b07ab0"/>
<ellipse cx="10" cy="92" rx="10" ry="12" fill="#d8a8c0"/>
<path d="M0,112 Q14,108 26,118 L24,137 L0,137 Z" fill="#e8b8b8"/>
<ellipse cx="62" cy="94" rx="9" ry="11" fill="#c8985a"/>
<ellipse cx="63" cy="94" rx="5.5" ry="7" fill="#e8c0a0"/>
<path d="M50,104 Q63,100 78,108 L80,137 L48,137 Z" fill="#8a6a8a"/>
<path d="M76,80 Q90,78 92,86 L92,137 L74,137 Z" fill="#6a2a8a"/>
<ellipse cx="86" cy="100" rx="8" ry="10" fill="#8a4a9a"/>
<path d="M40,118 L70,118 L72,137 L38,137 Z" fill="#3a2a5a"/>
<path d="M11,55 Q16,62 26,70 L32,66 Q22,59 14,53 Z" fill="#9a6a50"/>
<path d="M72,56 Q66,62 55,70 L51,66 Q62,59 70,53 Z" fill="#9a6a50"/>
<ellipse cx="41" cy="50" rx="7" ry="8" fill="#2a1810"/>
<ellipse cx="41" cy="52" rx="4.6" ry="6" fill="#8a5a40"/>
<path d="M31,62 Q41,58 51,62 L50,76 Q54,96 52,128 L30,128 Q27,96 32,76 Z" fill="#d41c1c"/>
</g>
<text x="46" y="9" font-family="Liberation Sans" font-weight="700" font-size="4" fill="#d8d8e0" text-anchor="middle" textLength="66" lengthAdjust="spacing">TARAJI P. HENSON</text>
<rect x="8" y="12.5" width="76" height="1" fill="#c8c8d8" opacity="0.4"/>
<text x="8" y="28.5" font-family="Liberation Sans" font-weight="700" font-size="7" fill="#fff" textLength="23" lengthAdjust="spacingAndGlyphs">WHAT</text>
<text x="33" y="29" font-family="Liberation Sans" font-weight="700" font-size="14" fill="#e828c8" textLength="31" lengthAdjust="spacingAndGlyphs">MEN</text>
<text x="21" y="46.5" font-family="Liberation Sans" font-weight="700" font-size="20" fill="#fff" textLength="67" lengthAdjust="spacingAndGlyphs">WANT</text>
<rect x="14" y="131" width="62" height="1" fill="#c8c8d8" opacity="0.35"/></svg>
<svg class="r" style="left:329px;top:966px" width="92" height="137" viewBox="0 0 92 137"><defs><radialGradient id="p5bg" cx="0.5" cy="0.3" r="0.75"><stop offset="0" stop-color="#2e98b8"/><stop offset="0.55" stop-color="#1a7898"/><stop offset="1" stop-color="#0a3458"/></radialGradient>
<filter id="b5" x="-20%" y="-20%" width="140%" height="140%"><feGaussianBlur stdDeviation="0.8"/></filter></defs>
<rect width="92" height="137" fill="url(#p5bg)"/>
<g filter="url(#b5)">
<path d="M44,36 Q50,30 55,38 L56,60 L42,60 Z" fill="#125a78" opacity="0.8"/>
<path d="M5,55 Q4,28 24,28 Q42,28 42,48 L36,42 Q22,38 10,50 Z" fill="#160c08"/>
<path d="M8,50 Q22,38 38,44 Q44,56 42,80 L6,80 Q2,66 8,50 Z" fill="#ecc098"/>
<path d="M52,60 Q54,45 68,45 Q84,46 86,62 L88,90 L50,90 Z" fill="#8a4a2a"/>
<ellipse cx="66" cy="68" rx="10" ry="12" fill="#e8e4e0"/>
</g>
<g fill="#e8b080" opacity="0.55"><rect x="19" y="5" width="26" height="1.7"/><rect x="53" y="5" width="20" height="1.7"/></g>
<text x="46" y="22.5" font-family="Liberation Sans" font-weight="700" font-size="12.5" fill="#f2ae6e" stroke="#7a4018" stroke-width="0.35" text-anchor="middle" textLength="80" lengthAdjust="spacingAndGlyphs">CELAL   CEREN</text>
<text x="46" y="20" font-family="Liberation Sans" font-size="3" fill="#f2ae6e" text-anchor="middle">ile</text>
<rect x="49" y="25.5" width="36" height="1.5" fill="#d8e8f0" opacity="0.5"/><rect x="62" y="33" width="22" height="0.8" fill="#d8e8f0" opacity="0.35"/></svg>
</body></html>
